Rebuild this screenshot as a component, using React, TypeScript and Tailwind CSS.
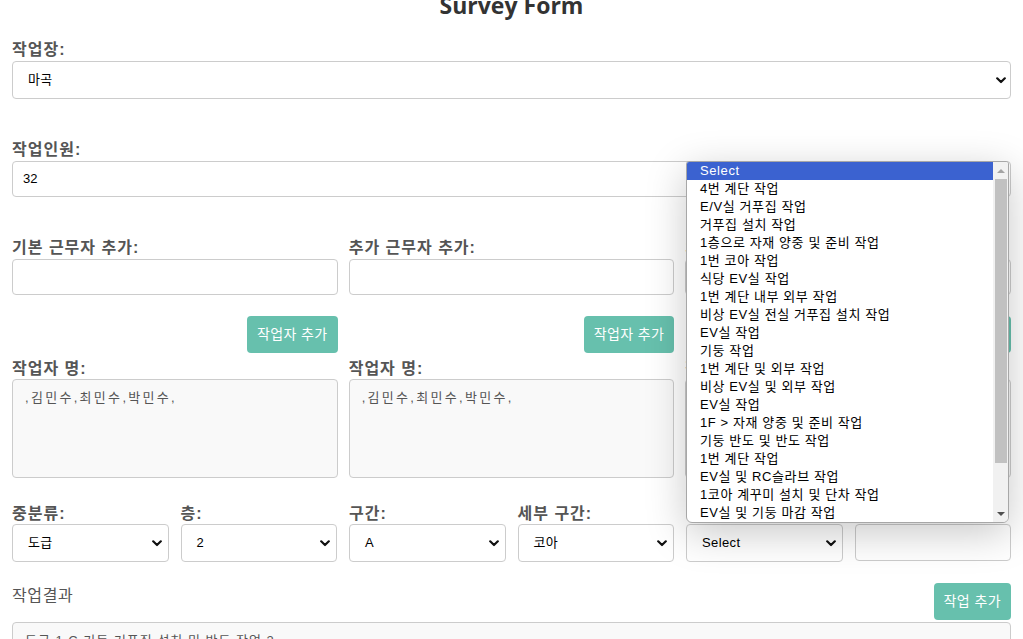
import React from "react";

const KR = "font-['Liberation_Sans','Noto_Sans_CJK_KR',sans-serif]";

const Chevron = () => (
    <svg width="10" height="7" viewBox="0 0 10 7" className="shrink-0">
        <path d="M1.2 1.3 L5 5 L8.8 1.3" fill="none" stroke="#111" strokeWidth="2.2" strokeLinecap="round" strokeLinejoin="round" />
    </svg>
);

const Select = ({ value, wide = false }: { value: string; wide?: boolean }) => (
    <div className={`h-[38px] border border-[#ccc] rounded-[4px] bg-white flex items-center justify-between pl-[15px] ${wide ? "pr-[4px]" : "pr-[6px]"} text-[13px] text-black tracking-[0.4px]`}>
        <span>{value}</span>
        <Chevron />
    </div>
);

const Label = ({ children }: { children: React.ReactNode }) => (
    <div className="block h-[20px] leading-[20px] text-[16px] font-semibold text-[#555] tracking-[1px] whitespace-nowrap">{children}</div>
);

const Button = ({ children }: { children: React.ReactNode }) => (
    <button className="h-[37px] px-[10px] rounded-[4px] bg-[#67c0ad] text-white text-[14px] tracking-[0.4px]">{children}</button>
);

const options = [
    "4번 계단 작업",
    "E/V실 거푸집 작업",
    "거푸집 설치 작업",
    "1층으로 자재 양중 및 준비 작업",
    "1번 코아 작업",
    "식당 EV실 작업",
    "1번 계단 내부 외부 작업",
    "비상 EV실 전실 거푸집 설치 작업",
    "EV실 작업",
    "기둥 작업",
    "1번 계단 및 외부 작업",
    "비상 EV실 및 외부 작업",
    "EV실 작업",
    "1F > 자재 양중 및 준비 작업",
    "기둥 반도 및 반도 작업",
    "1번 계단 작업",
    "EV실 및 RC슬라브 작업",
    "1코아 계꾸미 설치 및 단차 작업",
    "EV실 및 기둥 마감 작업",
];

const workers = [
    { label: "기본 근무자 추가:" },
    { label: "추가 근무자 추가:" },
    { label: "외부 근무자 추가:" },
];

export default function App() {
    return (
        <div className={`relative bg-white min-h-[639px] overflow-hidden px-3 ${KR}`}>
            <h1 className="-mt-[9px] h-[28px] leading-[28px] text-center text-[23px] font-bold text-[#333] font-['Open_Sans',sans-serif]">
                Survey Form
            </h1>

            <div className="mt-[21px]">
                <Label>작업장:</Label>
                <div className="mt-px">
                    <Select value="마곡" wide />
                </div>
            </div>

            <div className="mt-[41px]">
                <Label>작업인원:</Label>
                <div className="mt-px h-[36px] border border-[#ccc] rounded-[4px] flex items-center px-[10px] text-[13px] text-black">32</div>
            </div>

            <div className="mt-[41px] grid grid-cols-3 gap-x-[11px]">
                {workers.map((w) => (
                    <div key={w.label} className="flex flex-col">
                        <Label>{w.label}</Label>
                        <div className="mt-px h-[36px] border border-[#ccc] rounded-[4px] bg-white" />
                        <div className="mt-[21px] flex justify-end">
                            <Button>작업자 추가</Button>
                        </div>
                        <div className="mt-[6px]">
                            <Label>작업자 명:</Label>
                        </div>
                        <div className="h-[99px] border border-[#ccc] rounded-[4px] bg-[#f9f9f9] px-[12px] py-[8px] text-[13px] text-[#555] tracking-[2.3px]">
                            ,김민수,최민수,박민수,
                        </div>
                    </div>
                ))}
            </div>

            <div className="mt-[26px] grid grid-cols-6 gap-x-[12px]">
                <div>
                    <Label>중분류:</Label>
                    <Select value="도급" />
                </div>
                <div>
                    <Label>층:</Label>
                    <Select value="2" />
                </div>
                <div>
                    <Label>구간:</Label>
                    <Select value="A" />
                </div>
                <div>
                    <Label>세부 구간:</Label>
                    <Select value="코아" />
                </div>
                <div>
                    <Label>작업 내용:</Label>
                    <Select value="Select" />
                </div>
                <div>
                    <Label>비고:</Label>
                    <div className="h-[37px] border border-[#ccc] rounded-[4px] bg-white" />
                </div>
            </div>

            <div className="mt-[21px] flex justify-between items-start">
                <div className="mt-[3px] text-[16px] leading-[20px] text-[#555] tracking-[0.6px]">작업결과</div>
                <Button>작업 추가</Button>
            </div>
            <div className="mt-[2px] h-[100px] border border-[#ccc] rounded-[4px] bg-[#f9f9f9] px-[12px] py-[8px] text-[13px] text-[#555] tracking-[1px]">
                도급 1 C 기둥 거푸집 설치 및 반도 작업 2
            </div>

            {/* open dropdown list */}
            <div className="absolute left-[686px] top-[161px] w-[323px] h-[362px] bg-white border border-[#a7a7a7] rounded-b-[6px] rounded-t-[3px] shadow-[0_10px_40px_rgba(0,0,0,0.22)] flex overflow-hidden">
                <div className="flex-1 flex flex-col text-[13px] leading-[18px] text-black tracking-[0.6px]">
                    <div className="h-[18px] pl-[13px] bg-[#3b62d0] text-white">Select</div>
                    {options.map((o, i) => (
                        <div key={i} className="h-[18px] pl-[13px] whitespace-nowrap">{o}</div>
                    ))}
                </div>
                <div className="w-[15px] bg-[#f1f1f1] flex flex-col items-center">
                    <div className="h-[17px] flex items-center justify-center">
                        <div className="w-0 h-0 border-l-[4px] border-r-[4px] border-b-[4px] border-l-transparent border-r-transparent border-b-[#a3a3a3]" />
                    </div>
                    <div className="w-[12px] h-[284px] bg-[#c1c1c1]" />
                    <div className="flex-1" />
                    <div className="h-[17px] flex items-center justify-center">
                        <div className="w-0 h-0 border-l-[4px] border-r-[4px] border-t-[4px] border-l-transparent border-r-transparent border-t-[#505050]" />
                    </div>
                </div>
            </div>
        </div>
    );
}
